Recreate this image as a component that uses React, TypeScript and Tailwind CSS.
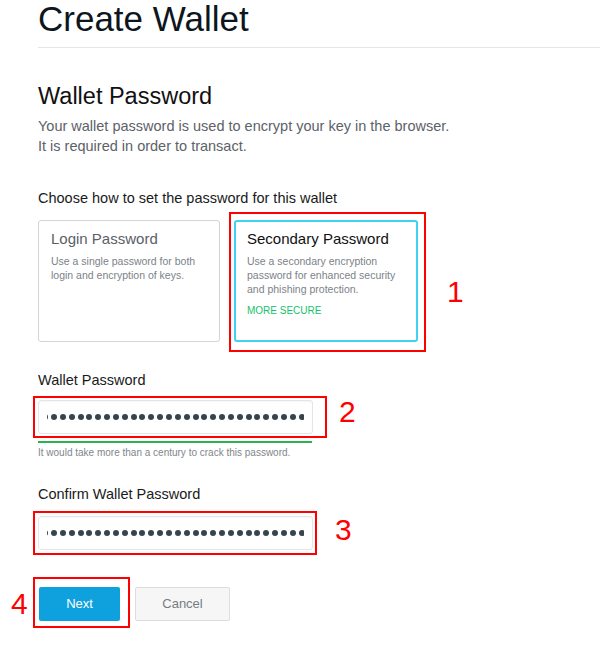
import type { ReactNode } from 'react';

function Dots({ cursor }: { cursor?: boolean }) {
  return (
    <div className="flex h-full items-center overflow-hidden">
      <div className="flex items-center gap-[2.85px] ml-[-4.85px]">
        {Array.from({ length: 30 }).map((_, i) => (
          <span key={i} className="block w-[6px] h-[6px] shrink-0 rounded-full bg-[#36444e]" />
        ))}
        {cursor && <span className="block w-px h-[13px] ml-[1px] bg-[#222]" />}
      </div>
    </div>
  );
}

function Marker({ children, className = '' }: { children: ReactNode; className?: string }) {
  return <span className={`block text-[30px] leading-[30px] text-[#ff0000] ${className}`}>{children}</span>;
}

function PasswordInput({ cursor }: { cursor?: boolean }) {
  return (
    <div className="w-[275px] h-[34px] bg-white border border-[#e2e4e6] rounded-[3px] shadow-[inset_0_1px_2px_rgba(0,0,0,0.04)] px-[8px]">
      <Dots cursor={cursor} />
    </div>
  );
}

export default function App() {
  return (
    <div className="min-h-screen bg-white font-['Liberation_Sans',Arial,sans-serif] overflow-hidden">
      <div className="pl-[38px]">
        <h1 className="text-[35px] leading-[38px] text-[#0d1620]">Create Wallet</h1>
        <div className="mt-[9px] h-px bg-[#e6e6e6]" />

        <h2 className="mt-[36px] text-[23.5px] leading-[24px] text-[#111]">Wallet Password</h2>
        <p className="mt-[8px] text-[14.5px] leading-[20px] text-[#5c6268]">
          Your wallet password is used to encrypt your key in the browser.
          <br />
          It is required in order to transact.
        </p>

        <div className="mt-[32px] text-[14.5px] leading-[20px] text-[#1a1a1a]">
          Choose how to set the password for this wallet
        </div>

        {/* options */}
        <div className="mt-[12px] flex items-start">
          <div className="w-[182px] h-[122px] border border-[#d2d4d6] rounded-[3px] pt-[8px] px-[12px]">
            <div className="text-[15px] leading-[20px] text-[#5a6066]">Login Password</div>
            <div className="mt-[5px] text-[10.5px] leading-[14px] text-[#7c8288]">
              Use a single password for both login and encryption of keys.
            </div>
          </div>
          <div className="ml-[9px] -mt-[8px] -mb-[10px] border-2 border-[#ff0000] pl-[3px] pt-[6px] pr-[6px] pb-[8px]">
            <div className="w-[184px] h-[122px] border-2 border-[#3fd2f2] rounded-[3px] pt-[7px] px-[11px]">
              <div className="text-[15px] leading-[20px] text-[#111]">Secondary Password</div>
              <div className="mt-[5px] text-[10.5px] leading-[14px] text-[#7c8288]">
                Use a secondary encryption password for enhanced security and phishing protection.
              </div>
              <div className="mt-[8px] text-[10px] leading-[14px] text-[#12c46a]">MORE SECURE</div>
            </div>
          </div>
          <Marker className="ml-[21px] mt-[57px]">1</Marker>
        </div>

        <div className="mt-[28px] text-[14.5px] leading-[20px] text-[#1a1a1a]">Wallet Password</div>
        <div className="mt-[6px] -ml-[5px] flex items-start">
          <div className="border-2 border-[#ff0000] pl-[3px] pt-[2px] pr-[12px] pb-[2px]">
            <PasswordInput />
          </div>
          <Marker className="ml-[12px] mt-[1px]">2</Marker>
        </div>
        <div className="mt-[3px] w-[274px] h-[2px] bg-[#2bb24c]" />
        <div className="mt-[3px] text-[10px] leading-[14px] text-[#7f868c]">
          It would take more than a century to crack this password.
        </div>

        <div className="mt-[24px] text-[14.5px] leading-[20px] text-[#1a1a1a]">Confirm Wallet Password</div>
        <div className="mt-[7px] -ml-[5px] flex items-start">
          <div className="border-2 border-[#ff0000] pl-[3px] pt-[3px] pr-[2px] pb-[3px]">
            <PasswordInput cursor />
          </div>
          <Marker className="ml-[18px] mt-[4px]">3</Marker>
        </div>

        <div className="mt-[22px] -ml-[27px] flex items-start">
          <Marker className="w-[17px] mt-[12px]">4</Marker>
          <div className="ml-[5px] border-2 border-[#ff0000] pl-[4px] pt-[8px] pr-[8px] pb-[5px]">
            <button className="block w-[81px] h-[34px] rounded-[2px] bg-[#0fa1dd] text-white text-[13px]">Next</button>
          </div>
          <button className="ml-[5px] mt-[10px] w-[95px] h-[34px] rounded-[2px] bg-[#f6f6f6] border border-[#dedede] text-[#777c80] text-[13px]">
            Cancel
          </button>
        </div>
      </div>
    </div>
  );
}
